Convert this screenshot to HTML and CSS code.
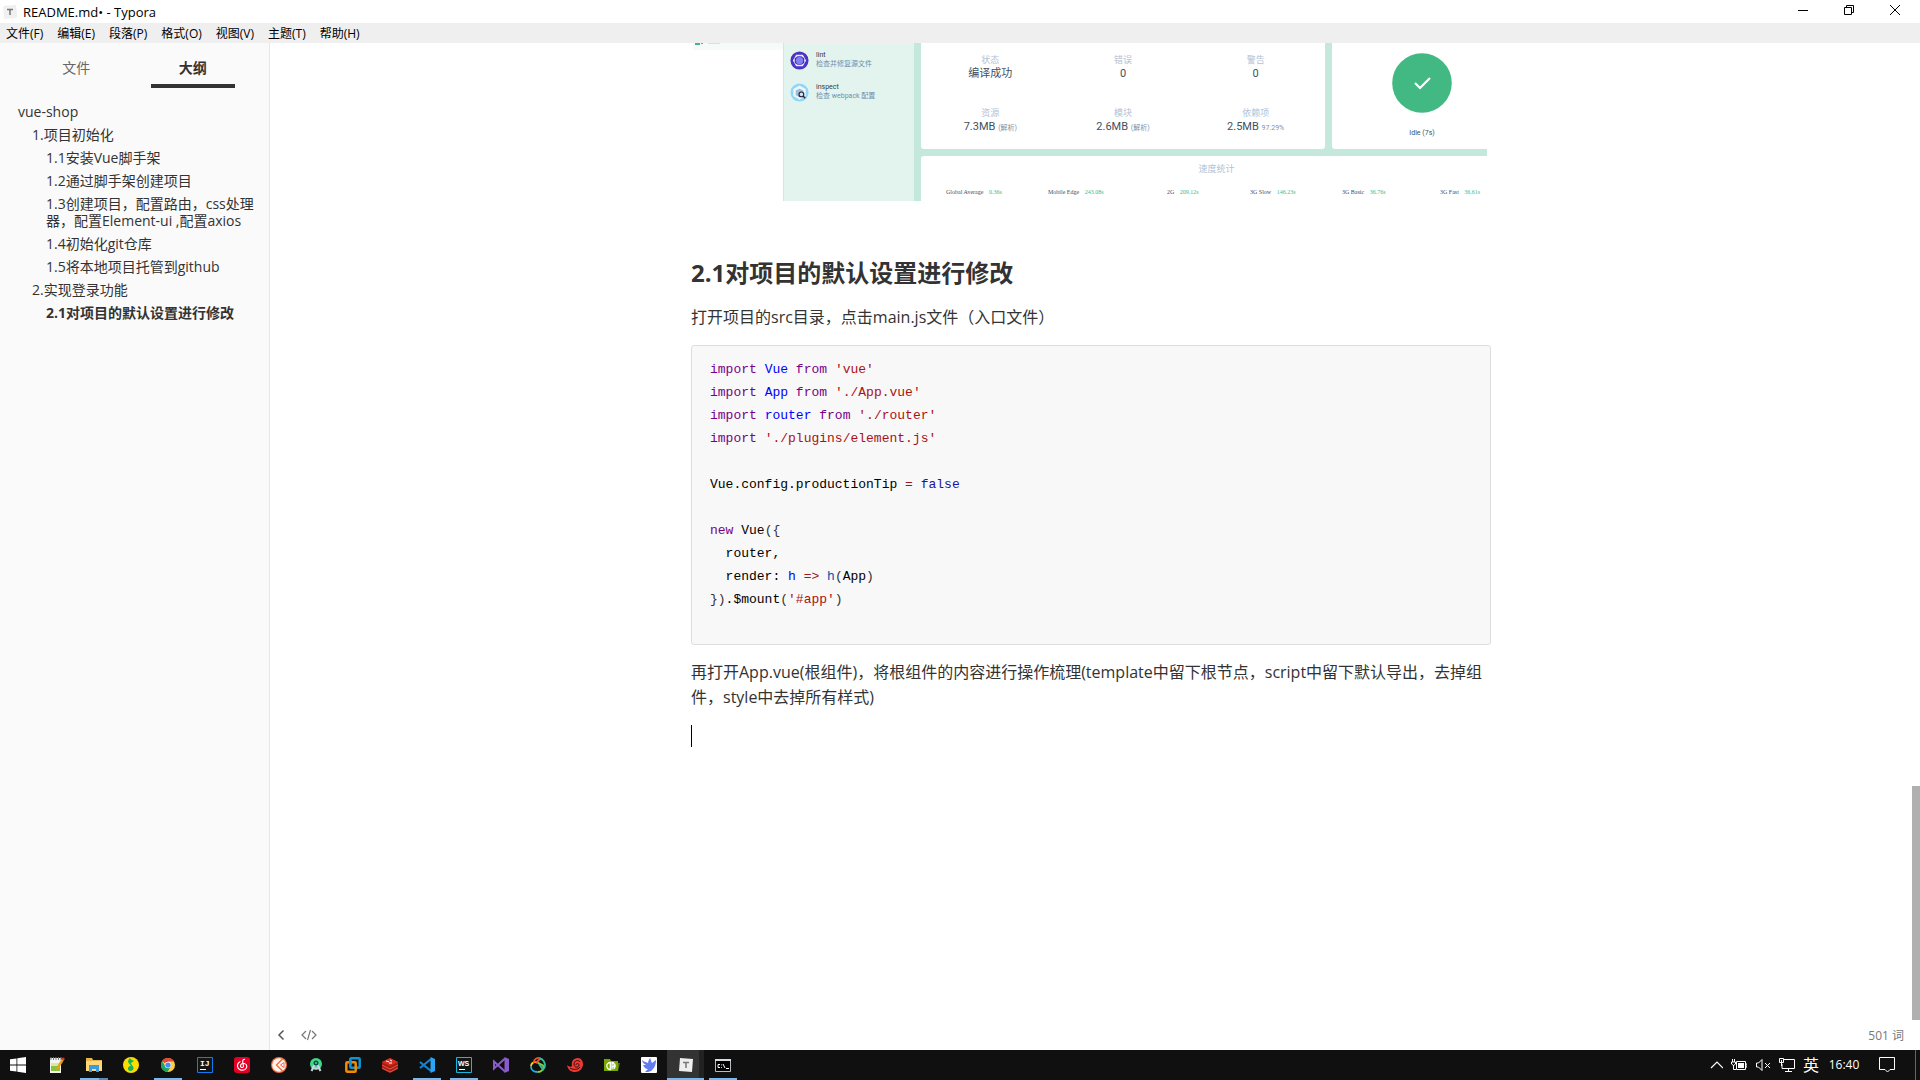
FILE: index.html
```html
<!DOCTYPE html>
<html lang="zh-CN">
<head>
<meta charset="utf-8">
<title>README.md• - Typora</title>
<link rel="stylesheet" href="styles.css">
</head>
<body>
<header class="titlebar">
  <svg class="app-icon" viewBox="0 0 16 16"><path d="M2 2l12-1 1 12-12 1z" fill="#ececec"/><path d="M1 3l12-1 1 12-12 1z" fill="#f1f1f1"/><path d="M5 5.500h6M8 5v6" stroke="#777" stroke-width="1.500" fill="none"/></svg>
  <span class="window-title">README.md• - Typora</span>
  <div class="window-buttons">
    <button aria-label="最小化"><svg viewBox="0 0 10 10"><path d="M0 5.5h10" stroke="#000"/></svg></button>
    <button aria-label="还原"><svg viewBox="0 0 10 10"><path d="M.5 2.5h7v7h-7zM2.5 2V.5h7v7H8" stroke="#000" fill="none"/></svg></button>
    <button aria-label="关闭"><svg viewBox="0 0 10 10"><path d="M0 0l10 10M10 0L0 10" stroke="#000"/></svg></button>
  </div>
</header>
<nav class="menubar">
  <button>文件(F)</button><button>编辑(E)</button><button>段落(P)</button><button>格式(O)</button><button>视图(V)</button><button>主题(T)</button><button>帮助(H)</button>
</nav>
<div class="workspace">
  <aside class="sidebar">
    <div class="tabs">
      <button class="tab">文件</button>
      <button class="tab tab-active">大纲</button>
    </div>
    <nav class="outline">
      <a href="#top" class="level-1">vue-shop</a>
      <a href="#top" class="level-2">1.项目初始化</a>
      <a href="#top" class="level-3">1.1安装Vue脚手架</a>
      <a href="#top" class="level-3">1.2通过脚手架创建项目</a>
      <a href="#top" class="level-3">1.3创建项目，配置路由，css处理器，配置Element-ui ,配置axios</a>
      <a href="#top" class="level-3">1.4初始化git仓库</a>
      <a href="#top" class="level-3">1.5将本地项目托管到github</a>
      <a href="#top" class="level-2">2.实现登录功能</a>
      <a href="#settings" class="level-3 current">2.1对项目的默认设置进行修改</a>
    </nav>
  </aside>
  <main class="editor">
    <div class="page-row">
      <article class="document">
        <figure class="dashboard">
          <div class="dash-rail"><div class="dash-rail-item"><svg viewBox="0 0 28 2"><path d="M2 0h5v2H2z" fill="#42b983"/><path d="M8 0h2v1H8z" fill="#2ab7ca"/><path d="M15 0h12v1H15z" fill="#d3e3dd"/></svg></div></div>
          <div class="dash-tasks">
            <div class="task">
              <svg viewBox="0 0 20 20"><circle cx="10" cy="10" r="9.5" fill="#4b32c3"/><path d="M6.5 4h7l3.5 6-3.5 6h-7L3 10z" fill="#e9e7fb"/><path d="M8 5.5h4l3 2v5l-3 2H8l-3-2v-5z" fill="#4b32c3"/><circle cx="10" cy="10" r="3.8" fill="#8080f2"/></svg>
              <div class="task-text"><span class="task-name">lint</span><span>检查并修复源文件</span></div>
            </div>
            <div class="task">
              <svg viewBox="0 0 20 20"><circle cx="10" cy="10" r="9.5" fill="#8ed6fb"/><path d="M10 2.5l6.5 3.7v7.6L10 17.500l-6.500-3.700V6.200z" fill="#eef7fc"/><path d="M10 6l4 2v5l-4 2-4-2V8z" fill="#9dbdd9"/><circle cx="12" cy="12" r="2.500" fill="#cfe3f2" stroke="#223" stroke-width="1.200"/><path d="M14 14l2 2" stroke="#223" stroke-width="1.500"/></svg>
              <div class="task-text"><span class="task-name">inspect</span><span>检查 webpack 配置</span></div>
            </div>
          </div>
          <div class="dash-main">
            <div class="dash-top">
              <div class="card stats">
                <div class="stat"><span>状态</span><b>编译成功</b></div>
                <div class="stat"><span>错误</span><b>0</b></div>
                <div class="stat"><span>警告</span><b>0</b></div>
                <div class="stat"><span>资源</span><b>7.3MB <small>(解析)</small></b></div>
                <div class="stat"><span>模块</span><b>2.6MB <small>(解析)</small></b></div>
                <div class="stat"><span>依赖项</span><b>2.5MB <small>97.29%</small></b></div>
              </div>
              <div class="card idle">
                <svg viewBox="0 0 60 60"><circle cx="30" cy="30" r="29.800" fill="#42b983"/><path d="M23 30l5 5 10-10" fill="none" stroke="#fff" stroke-width="2.200"/></svg>
                <span>Idle (7s)</span>
              </div>
            </div>
            <div class="card speed">
              <span class="speed-title">速度统计</span>
              <div class="speed-row">
                <span>Global Average <i>0.36s</i></span><span>Mobile Edge <i>243.08s</i></span><span>2G <i>209.12s</i></span><span>3G Slow <i>146.23s</i></span><span>3G Basic <i>36.76s</i></span><span>3G Fast <i>36.61s</i></span>
              </div>
            </div>
          </div>
        </figure>
        <h2 id="settings">2.1对项目的默认设置进行修改</h2>
        <p>打开项目的src目录，点击main.js文件（入口文件）</p>
<pre class="code"><span class="kw">import</span> <span class="def">Vue</span> <span class="kw">from</span> <span class="str">'vue'</span>
<span class="kw">import</span> <span class="def">App</span> <span class="kw">from</span> <span class="str">'./App.vue'</span>
<span class="kw">import</span> <span class="def">router</span> <span class="kw">from</span> <span class="str">'./router'</span>
<span class="kw">import</span> <span class="str">'./plugins/element.js'</span>

<span class="var">Vue.config.productionTip</span> <span class="op">=</span> <span class="atom">false</span>

<span class="kw">new</span> <span class="var">Vue</span><span class="bracket">({</span>
  <span class="var">router,</span>
  <span class="var">render:</span> <span class="def">h</span> <span class="op">=&gt;</span> <span class="local">h</span><span class="bracket">(</span><span class="var">App</span><span class="bracket">)</span>
<span class="bracket">})</span><span class="var">.$mount</span><span class="bracket">(</span><span class="str">'#app'</span><span class="bracket">)</span>

</pre>
        <p>再打开App.vue(根组件)，将根组件的内容进行操作梳理(template中留下根节点，script中留下默认导出，去掉组件，style中去掉所有样式)</p>
        <div class="caret-line"><span class="caret"></span></div>
      </article>
    </div>
    <footer class="statusbar">
      <button aria-label="收起侧栏"><svg viewBox="0 0 16 12"><path d="M10.500 1.500L6 6l4.500 4.500" fill="none" stroke="#555" stroke-width="1.500"/></svg></button>
      <button aria-label="源代码模式"><svg viewBox="0 0 16 12"><path d="M5 2L1 6l4 4M11 2l4 4-4 4M9.500 1l-3 10" fill="none" stroke="#777" stroke-width="1.200"/></svg></button>
      <span class="word-count">501 词</span>
    </footer>
  </main>
  <div class="scrollbar"><div class="thumb"></div></div>
</div>
<footer class="taskbar">
  <button aria-label="开始" class="start"><svg viewBox="0 0 16 16"><path d="M0 2.300L6.500 1.400v6.200H0zM7.300 1.300L16 0v7.600H7.300zM0 8.400h6.500v6.200L0 13.700zM7.300 8.400H16V16l-8.700-1.300z" fill="#fff"/></svg></button>
  <button aria-label="Notepad++"><svg viewBox="0 0 16 16"><path d="M1 1h11v15H1z" fill="#f4f4ee"/><path d="M2 6h9v8H2z" fill="#84c441"/><path d="M2 6h9v3H2z" fill="#d7eaa5"/><path d="M2 0v3M4.500 0v3M7 0v3M9.500 0v3M12 0v3" stroke="#777"/><path d="M14 2L8 12" stroke="#e8a020" stroke-width="2.500"/><path d="M15 1l-1.500 2" stroke="#d33" stroke-width="2.500"/></svg></button>
  <button aria-label="资源管理器" class="running grouped"><svg viewBox="0 0 16 16"><path d="M0 1h6l1 2h9v11H0z" fill="#e9b44c"/><path d="M0 4h16v10H0z" fill="#ffd976"/><path d="M3 8h10v7h-3v-3H6v3H3z" fill="#3f9ae0"/></svg></button>
  <button aria-label="QQ音乐"><svg viewBox="0 0 16 16"><circle cx="8" cy="8" r="8" fill="#ffdc00"/><path d="M7 1c1 2 3 2 4 3L8 6c0 2 3 3 2.500 6-.5 2-5 3-5.500 0C4.700 9.500 7 9 8 9L5 5c0-2 1-3 2-4z" fill="#12b35b"/></svg></button>
  <button aria-label="Chrome" class="running"><svg viewBox="0 0 16 16"><circle cx="8" cy="8" r="7" fill="#ffcd40"/><path d="M8 8L2 4.300A7 7 0 0 1 14 4.500H8z" fill="#e5473a"/><path d="M2 4.300A7 7 0 0 0 7.500 15L10.500 10 6 10z" fill="#1ea362"/><circle cx="8" cy="8" r="3.300" fill="#f1f1f1"/><circle cx="8" cy="8" r="2.600" fill="#4c8bf5"/></svg></button>
  <button aria-label="IntelliJ IDEA"><svg viewBox="0 0 16 16"><path d="M.5.5h15v15H.5z" fill="#151515" stroke="#137bf0"/><text x="3" y="9" class="glyph">IJ</text><path d="M3 12.500h6" stroke="#fff"/></svg></button>
  <button aria-label="网易云音乐"><svg viewBox="0 0 16 16"><rect width="16" height="16" rx="3" fill="#e60026"/><path d="M11 2.500C9 2 8.500 3.500 8.700 5l.8 4c.1 2-3 2-3 0 0-2 2-3 4-2.500 3 1 3 4.500.5 6-3 1.500-7 .5-7.500-3-.2-2 1-4 3-5" fill="none" stroke="#fff" stroke-width="1.200"/></svg></button>
  <button aria-label="Postman"><svg viewBox="0 0 16 16"><circle cx="8" cy="8" r="8" fill="#f26b3e"/><circle cx="8" cy="8" r="6.800" fill="#fff4ee"/><path d="M11.500 2L5.500 8l6 6" fill="none" stroke="#f26b3e" stroke-width="1.400"/><path d="M9.500 8l3.500-2.500v5z" fill="#fff" stroke="#f26b3e"/></svg></button>
  <button aria-label="Android Studio"><svg viewBox="0 0 16 16"><circle cx="8" cy="7" r="6" fill="#3ddc84"/><path d="M8 5L3.500 14M8 5l4.500 9" stroke="#c8d8df" stroke-width="2"/><path d="M4 10q4 3 8 0" stroke="#c8d8df" stroke-width="1.500" fill="none"/><circle cx="8" cy="6" r="2.500" fill="#17445c"/><circle cx="8" cy="6" r="1" fill="#3ddc84"/></svg></button>
  <button aria-label="VMware"><svg viewBox="0 0 16 16"><rect x="5.300" y="1.300" width="9.400" height="9.400" rx="1" fill="none" stroke="#0f95d4" stroke-width="2.500"/><rect x="1.300" y="5.300" width="9.400" height="9.400" rx="1" fill="none" stroke="#f38b00" stroke-width="2.500"/><path d="M5.300 3v5" stroke="#0f95d4" stroke-width="2.500"/></svg></button>
  <button aria-label="Redis"><svg viewBox="0 0 16 16"><path d="M0 5l8-4 8 4v7l-8 4-8-4z" fill="#a41e11"/><path d="M0 5l8-4 8 4-8 4z" fill="#d82c20"/><path d="M0 8l8 4 8-4M0 11l8 4 8-4" stroke="#e2564b" fill="none"/><path d="M4 4l3 .8M8 3l2 1M7 6h3" stroke="#fff"/></svg></button>
  <button aria-label="VS Code" class="running"><svg viewBox="0 0 16 16"><path d="M1 5l11 9M1 11l11-9" stroke="#1185d0" stroke-width="2.200"/><path d="M11.500 0L16 2v12l-4.500 2z" fill="#2aa4f4"/></svg></button>
  <button aria-label="WebStorm" class="running"><svg viewBox="0 0 16 16"><path d="M.5.500h15v15H.5z" fill="#101515" stroke="#16b9dc"/><text x="2" y="9" class="glyph glyph-sans">WS</text><path d="M3 12.500h6" stroke="#fff"/></svg></button>
  <button aria-label="Visual Studio"><svg viewBox="0 0 16 16"><path d="M12 1.500L1 11.500V4.500l11 10" stroke="#8a5cc8" stroke-width="2" fill="none"/><path d="M11.500 0L16 2v12l-4.500 2z" fill="#8a5cc8"/></svg></button>
  <button aria-label="Navicat"><svg viewBox="0 0 16 16"><g fill="none" stroke-width="1.800"><path d="M7 5.500C3 4 1 7 1 9.500" stroke="#ffc928"/><path d="M1 9.500C1 13 4 15 7.500 15" stroke="#1fb6e8"/><path d="M7.500 15c4 0 7-3 5.500-6.500L6.500 5" stroke="#9c3"/><path d="M4 6c-1-4 4-6 6.500-4.500L6 6" stroke="#f0542b"/><path d="M10 1.500c3 .5 5 4 5 7 0 2-1 3-2 4L9 7" stroke="#2fc0a0"/></g></svg></button>
  <button aria-label="Spiral"><svg viewBox="0 0 16 16"><path d="M0 8c2 2 4 2 5 1-1-4 1-8 6-8 3 0 5 3 5 6 0 5-4 8-8 8-4 0-7-2-8-7z" fill="#ee3a30"/><path d="M13 5c-2-3-6-1-6 2 0 4 5 4 5 1 0-2-3-2-3 0M3 11c3 2 8 2 10-1" stroke="#351010" fill="none"/></svg></button>
  <button aria-label="同步文件夹"><svg viewBox="0 0 16 16"><path d="M0 2h6l1 2h7v10H0z" fill="#78a800"/><path d="M14 6h2l-2 8" fill="#517c00"/><path d="M6.300 5.500a3.500 3.500 0 0 0 0 7zM8 12.500V5.500a2 2 0 0 1 0 4.500M9.500 12a3.500 3.500 0 0 0 1-5" fill="none" stroke="#fff" stroke-width="1.300"/></svg></button>
  <button aria-label="迅雷"><svg viewBox="0 0 16 16"><rect width="16" height="16" rx="1" fill="#fff"/><path d="M1 3c2 2 5 2 6 3 0-2 1-3 2-5 1 2 1 3 2 5l4-3c0 4-1 8-5 11-2 1-4 1-6 1l3-3c-3 0-4-2-5-4h3C3 7 1 5 1 3z" fill="#637cf2"/></svg></button>
  <button aria-label="Typora" class="focused"><svg viewBox="0 0 16 16"><path d="M2 1l13 1-1 13L1 14z" fill="#eee"/><path d="M5 5.500h6M8 5v6" stroke="#777" stroke-width="1.500"/></svg></button>
  <button aria-label="命令提示符" class="running"><svg viewBox="0 0 16 16"><path d="M.5 2.500h15v12H.5z" fill="#000" stroke="#b8bdc4"/><path d="M0 3h16" stroke="#d8dce0" stroke-width="2"/><path d="M5 7.500H3v3h2M6.500 7.500v.8M6.500 10v.8M8 7l2 4M11 11.500h3" stroke="#fff" fill="none"/></svg></button>
  <div class="tray">
    <svg viewBox="0 0 16 16"><path d="M4 11l6-6 6 6" fill="none" stroke="#fff" stroke-width="1.200"/></svg>
    <svg viewBox="0 0 16 16"><path d="M5.500 4.500h9v8h-9zM15 7h1v3h-1" fill="none" stroke="#fff"/><path d="M7 6h6v5H7z" fill="#fff"/><path d="M1.500 2v3M3.500 2v3M.5 5h4v2l-2 1.500L.5 7zM2.500 8v4.500H5" fill="none" stroke="#fff"/></svg>
    <svg viewBox="0 0 16 16"><path d="M1.500 6h2L7 2.500v11L3.500 10h-2z" fill="none" stroke="#fff"/><path d="M10 6l5 5M15 6l-5 5" stroke="#fff"/></svg>
    <svg viewBox="0 0 16 16"><path d="M5 2.500h10.500v9H3V7M6 14.500h7M9.500 12v3M.5 1.500h4v4h-4zM2.500 3v6" fill="none" stroke="#fff"/></svg>
    <span class="ime">英</span>
    <span class="clock">16:40</span>
    <svg viewBox="0 0 16 16"><path d="M.5.500h15v12H11l-2.500 2.500L6 12.500H.5z" fill="none" stroke="#fff"/></svg>
  </div>
</footer>
</body>
</html>
```
FILE: styles.css
```css
* { box-sizing: border-box; }
body {
  margin: 0;
  height: 100vh;
  display: flex;
  flex-direction: column;
  overflow: hidden;
  background: #fff;
  color: #333;
  font-family: "Open Sans", "Noto Sans CJK SC", sans-serif;
}
button {
  border: 0;
  padding: 0;
  background: none;
  color: inherit;
  font: inherit;
}
svg { display: block; flex: none; }

/* Window chrome */
.titlebar {
  display: flex;
  align-items: center;
  height: 23px;
  flex: none;
  padding: 0 2px;
  gap: 5px;
  color: #000;
  font-size: 13px;
}
.app-icon { width: 16px; height: 16px; }
.window-buttons { display: flex; align-self: flex-start; margin-left: auto; }
.window-buttons button { width: 46px; height: 20px; display: grid; place-items: center; }
.window-buttons svg { width: 10px; height: 10px; }
.menubar {
  display: flex;
  align-items: flex-end;
  gap: 14px;
  height: 20px;
  flex: none;
  padding-left: 6px;
  background: #efefef;
  color: #000;
  font-size: 12px;
  line-height: 18px;
}
.workspace { display: flex; flex: 1; min-height: 0; }

/* Sidebar */
.sidebar {
  width: 270px;
  flex: none;
  background: #fafafa;
  border-right: 1px solid #e7e7e7;
  font-size: 14px;
}
.tabs { display: flex; padding: 9px 18px 12px; }
.tab {
  width: 117px;
  padding: 0 16px;
  line-height: 32px;
  color: #666;
}
.tab::after { content: ""; display: block; height: 4px; }
.tab-active { color: #333; font-weight: 700; }
.tab-active::after { background: #333; }
.outline { display: flex; flex-direction: column; padding-right: 10px; }
.outline a { color: #333; text-decoration: none; line-height: 17px; padding: 3px 0; }
.outline .level-1 { padding-left: 18px; }
.outline .level-2 { padding-left: 32px; }
.outline .level-3 { padding-left: 46px; }
.outline .current { font-weight: 700; }

/* Document */
.editor { display: flex; flex: 1; flex-direction: column; min-width: 0; }
.page-row { flex: 1; min-height: 0; overflow: hidden; }
.document { max-width: 800px; margin: 0 auto; font-size: 16px; line-height: 25px; }
.document h2 { margin: 55px 0 15px; font-size: 24px; line-height: 34px; }
.document p { margin: 0; }
.code {
  margin: 15px 0;
  padding: 12px 18px 10px;
  border: 1px solid #ddd;
  border-radius: 3px;
  background: #f8f8f8;
  font-family: "Liberation Mono", monospace;
  font-size: 13px;
  line-height: 23px;
}
.kw { color: #708; }
.def { color: #00f; }
.str { color: #a11; }
.op { color: #981a1a; }
.atom { color: #219; }
.local { color: #05a; }
.var { color: #000; }
.bracket { color: #333; }
.caret-line { padding-top: 15px; }
.caret { display: block; width: 1px; height: 22px; background: #000; }

/* Dashboard figure */
.dashboard {
  display: flex;
  height: 158px;
  margin: 0 4px 0 2px;
  overflow: hidden;
  font-family: Roboto, "Noto Sans CJK SC", sans-serif;
  font-size: 7px;
  line-height: 9px;
}
.dash-rail { width: 90px; flex: none; }
.dash-rail-item { height: 7px; background: #f6faf9; }
.dash-rail-item svg { width: 28px; height: 2px; }
.dash-tasks {
  display: flex;
  flex-direction: column;
  gap: 12px;
  width: 131px;
  flex: none;
  padding: 7px 6px;
  background: #e3f4ee;
  border-left: 1px solid #d3e7df;
}
.task { display: flex; align-items: center; gap: 7px; height: 20px; }
.task svg { width: 19px; height: 19px; }
.task-text { display: flex; flex-direction: column; color: #6f8fae; }
.task-name { color: #2c3e50; }
.dash-main {
  display: flex;
  flex: 1;
  flex-direction: column;
  gap: 7px;
  padding-left: 7px;
  background: #c5e8dc;
}
.dash-top { display: flex; gap: 7px; height: 106px; }
.card { background: #fff; }
.stats {
  display: grid;
  flex: 1;
  grid-template-columns: repeat(3, 1fr);
  grid-auto-rows: 40px;
  row-gap: 13px;
  padding: 11px 3px 0;
  border-radius: 0 0 3px 3px;
}
.stat { display: flex; flex-direction: column; align-items: center; color: #b3c2d4; font-size: 9px; line-height: 13px; }
.stat b { color: #41505f; font-size: 11px; font-weight: 400; }
.stat small { color: #8593a2; font-size: 7px; }
.idle {
  display: flex;
  flex-direction: column;
  align-items: center;
  gap: 16px;
  width: 155px;
  padding: 10px 0 0 25px;
  border-radius: 0 0 0 3px;
  color: #41505f;
}
.idle svg { width: 60px; height: 60px; }
.speed { flex: 1; border-radius: 3px 0 0; padding: 8px 0 0 25px; }
.speed-title { display: block; text-align: center; color: #b3c2d4; font-size: 9px; line-height: 10px; }
.speed-row {
  display: grid;
  grid-template-columns: 102px 119px 83px 92px 98px auto;
  padding-top: 14px;
  color: #41505f;
  font-family: "Liberation Serif", serif;
  font-size: 6px;
  line-height: 8px;
  white-space: nowrap;
}
.speed-row i { color: #42b983; font-style: normal; padding-left: 4px; }

/* Status bar and scrollbar */
.statusbar {
  display: flex;
  align-items: center;
  gap: 12px;
  height: 30px;
  flex: none;
  padding: 0 8px 0 3px;
  color: #777;
  font-size: 12px;
}
.statusbar svg { width: 16px; height: 12px; }
.word-count { margin-left: auto; }
.scrollbar { display: flex; flex-direction: column; width: 8px; flex: none; }
.scrollbar::before { content: ""; flex: 743; }
.scrollbar::after { content: ""; flex: 30; }
.thumb { flex: 234; background: #b0b0b0; }

/* Taskbar */
.taskbar { display: flex; height: 30px; flex: none; background: #101010; color: #fff; }
.taskbar > button { display: flex; flex-direction: column; align-items: center; width: 37px; padding-top: 7px; }
.taskbar > .start { width: 36px; margin-right: 2px; }
.taskbar svg { width: 16px; height: 16px; }
.glyph { fill: #fff; font: 700 8px "Liberation Mono", monospace; }
.glyph-sans { font-family: "Liberation Sans", sans-serif; font-size: 7px; }
.running::after { content: ""; width: 28px; height: 2px; margin-top: 5px; background: #76b9ed; }
.grouped::after { background: linear-gradient(90deg, #76b9ed 19px, #5a8cb3 19px); }
.focused { background: linear-gradient(90deg, #333 32px, #222 32px); }
.focused::after { content: ""; width: 100%; height: 2px; margin-top: 5px; background: #76b9ed; }
.tray {
  display: flex;
  align-items: center;
  gap: 8px;
  margin-left: auto;
  margin-right: 4px;
  padding-right: 20px;
  border-right: 1px solid #666;
}
.ime { font-size: 16px; line-height: 30px; }
.clock { width: 34px; margin-right: 10px; font-size: 12px; line-height: 30px; text-align: center; }
```
